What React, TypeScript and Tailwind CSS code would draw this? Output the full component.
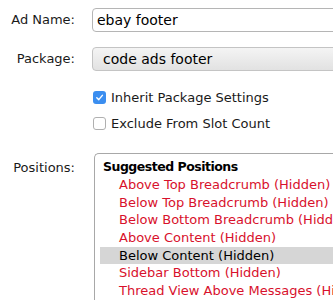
import React from "react";

const items = [
  { t: "Above Top Breadcrumb (Hidden)" },
  { t: "Below Top Breadcrumb (Hidden)" },
  { t: "Below Bottom Breadcrumb (Hidden)" },
  { t: "Above Content (Hidden)" },
  { t: "Below Content (Hidden)", sel: true },
  { t: "Sidebar Bottom (Hidden)" },
  { t: "Thread View Above Messages (Hidden)" },
];

export default function App() {
  return (
    <div
      className="w-[333px] h-[300px] overflow-hidden bg-white text-[13px] text-[#1a1a1a]"
      style={{ fontFamily: '"DejaVu Sans", sans-serif' }}
    >
      <div className="flex items-center h-[24px] mt-[8px]">
        <div className="w-[75px] shrink-0 text-right">Ad Name:</div>
        <div className="ml-[17px] flex-1 min-w-[260px] h-[24px] border border-[#b5b5b5] rounded-[4px] pl-[4px] flex items-center text-[14px] text-black">
          ebay footer
        </div>
      </div>
      <div className="flex items-center h-[24px] mt-[15px]">
        <div className="w-[75px] shrink-0 text-right">Package:</div>
        <div className="ml-[17px] flex-1 min-w-[260px] h-[24px] border border-[#c4c4c4] rounded-[4px] pl-[10px] flex items-center bg-gradient-to-b from-[#f4f4f4] to-[#e2e2e2] text-[14px] text-black">
          code ads footer
        </div>
      </div>
      <div className="ml-[93px] mt-[20px] flex flex-col gap-[13px]">
        <div className="flex items-center h-[13px]">
          <div className="w-[13px] h-[13px] rounded-[3px] bg-[#3b8ef0] flex items-center justify-center">
            <svg width="9" height="9" viewBox="0 0 10 10">
              <path d="M2 5.2 L4.2 7.4 L8.2 2.6" stroke="white" strokeWidth="1.6" fill="none" strokeLinecap="round" strokeLinejoin="round" />
            </svg>
          </div>
          <span className="ml-[5px]">Inherit Package Settings</span>
        </div>
        <div className="flex items-center h-[13px]">
          <div className="w-[13px] h-[13px] rounded-[3px] border border-[#b0b0b0] bg-white" />
          <span className="ml-[5px]">Exclude From Slot Count</span>
        </div>
      </div>
      <div className="flex mt-[23px]">
        <div className="w-[75px] shrink-0 text-right pt-[5px]">Positions:</div>
        <div className="ml-[19px] flex-1 min-w-[260px] border-l border-t border-[#a8a8a8] rounded-tl-[5px] pl-[5px] pt-[4px]">
          <div className="font-bold text-[12.5px] tracking-[-0.5px] h-[18px] leading-[18px] pl-[3px] text-black">Suggested Positions</div>
          {items.map((it) => (
            <div
              key={it.t}
              className={
                "h-[17.7px] leading-[17.7px] pl-[19px] whitespace-nowrap " +
                (it.sel ? "bg-[#d6d6d6] text-black" : "text-[#d8112c]")
              }
            >
              {it.t}
            </div>
          ))}
        </div>
      </div>
    </div>
  );
}
